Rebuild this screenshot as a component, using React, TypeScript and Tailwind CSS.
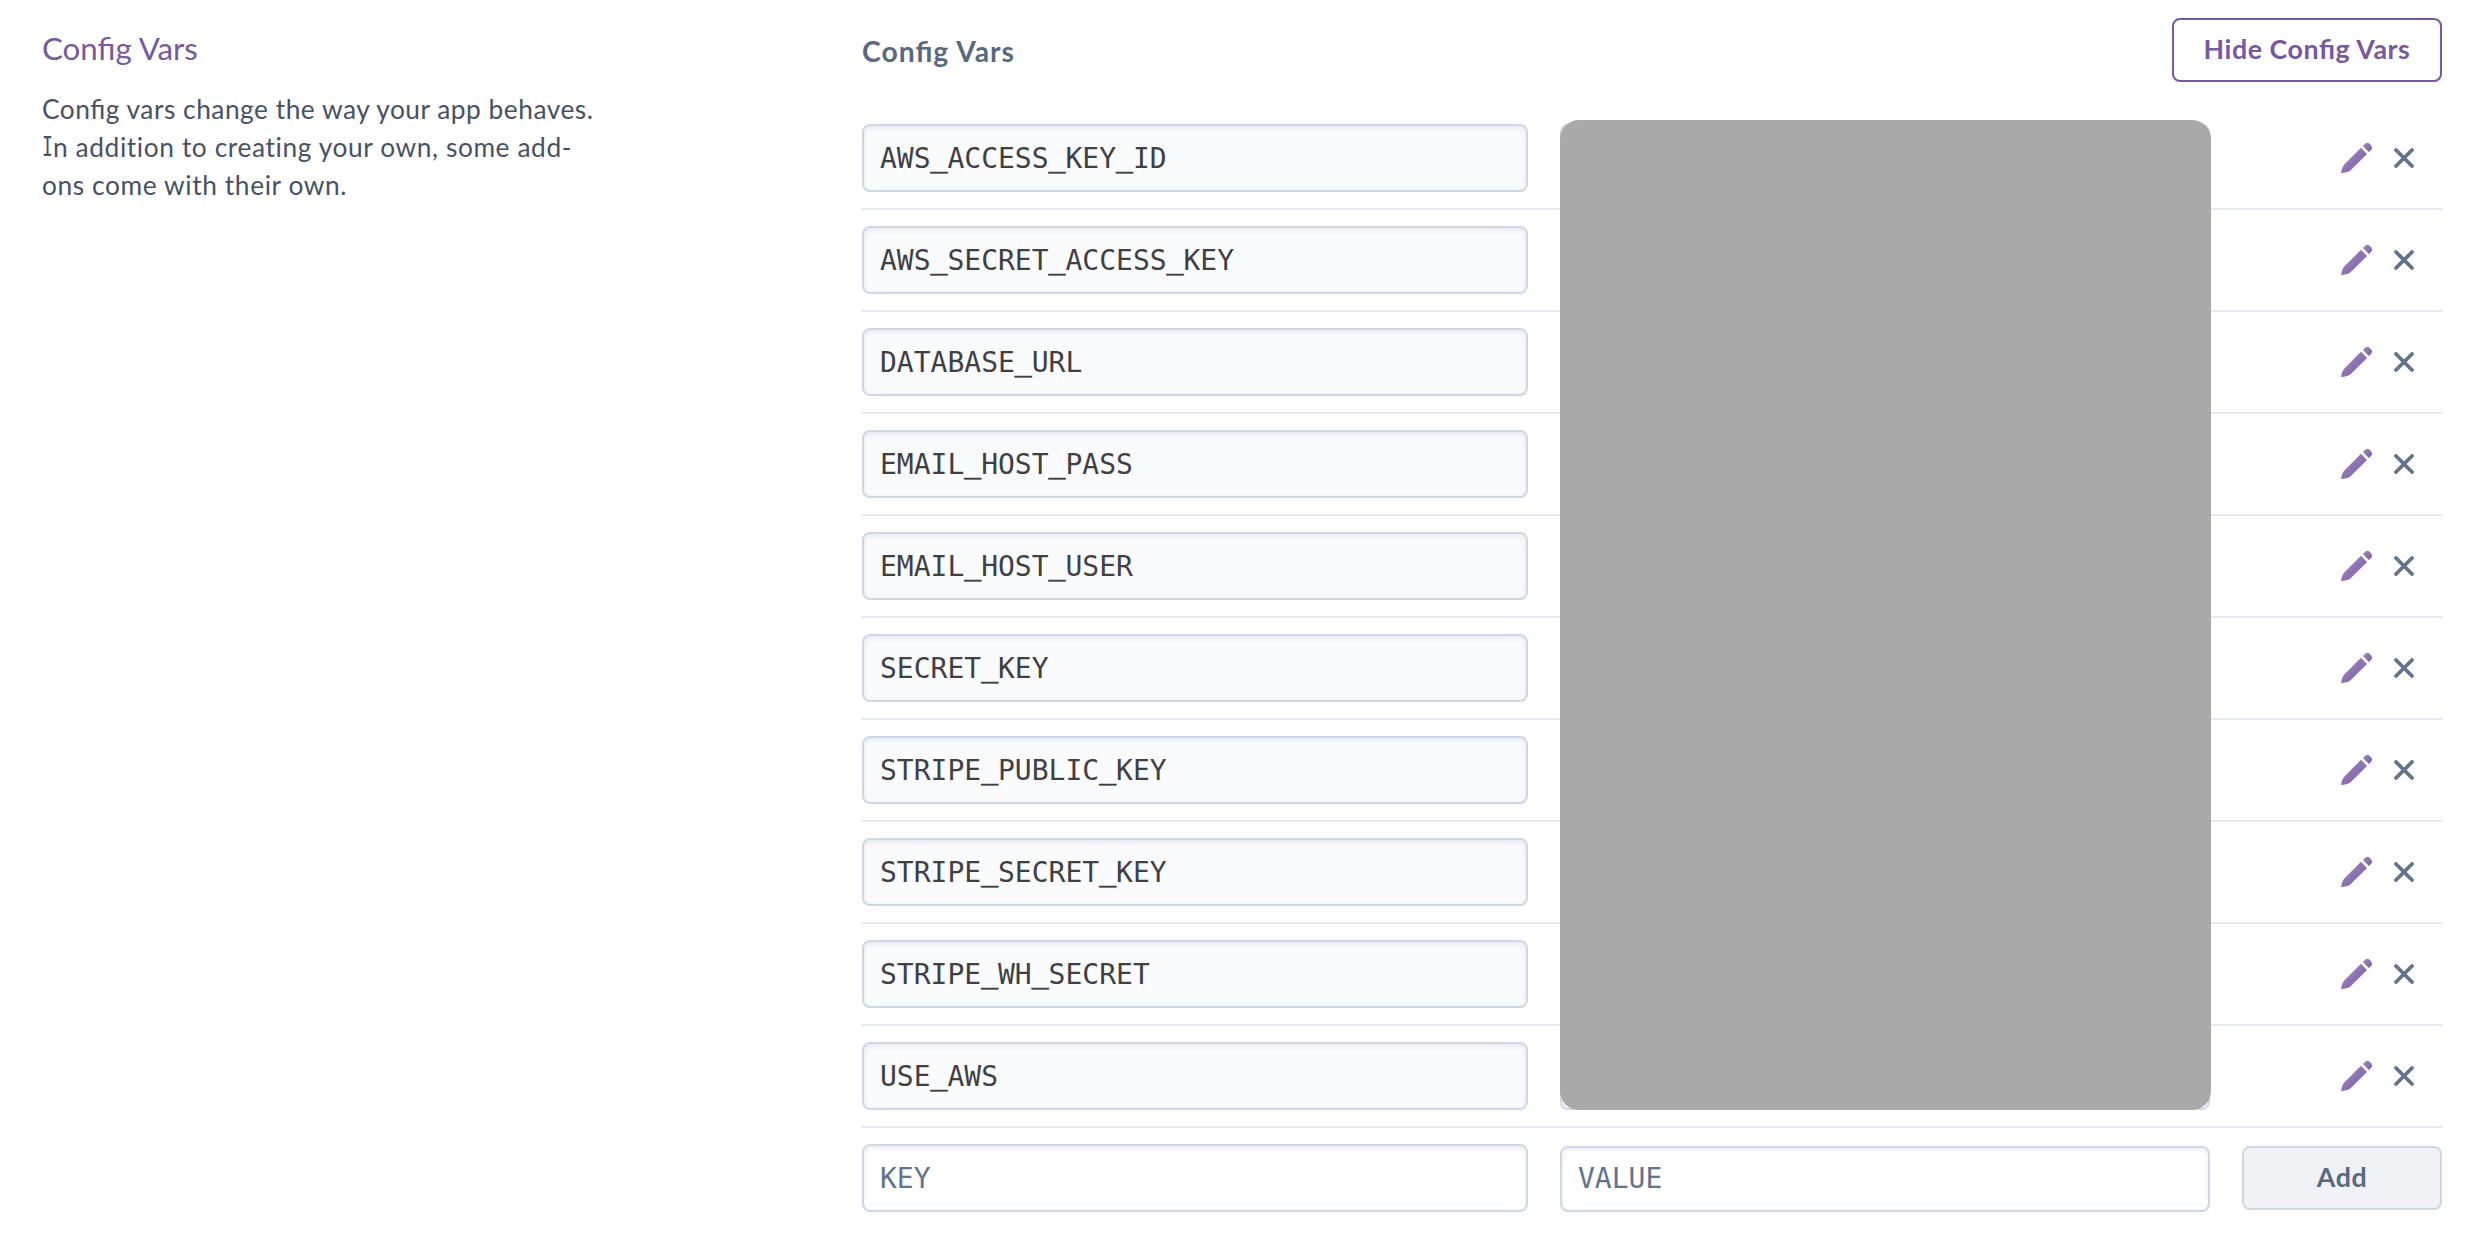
const keys = [
  "AWS_ACCESS_KEY_ID",
  "AWS_SECRET_ACCESS_KEY",
  "DATABASE_URL",
  "EMAIL_HOST_PASS",
  "EMAIL_HOST_USER",
  "SECRET_KEY",
  "STRIPE_PUBLIC_KEY",
  "STRIPE_SECRET_KEY",
  "STRIPE_WH_SECRET",
  "USE_AWS",
];

const field =
  "block w-full rounded-lg border-2 border-[#cfd7e6] px-4 font-['DejaVu_Sans_Mono',monospace] text-[28px] text-[#3f3f44] shadow-[inset_0_2px_5px_rgba(70,90,130,0.12)] outline-none placeholder:text-[#62738d] placeholder:opacity-100";

function KeyName({ name }: { name: string }) {
  return (
    <div className={`${field} h-[68px] bg-[#fafbfd] leading-[66px] whitespace-nowrap`}>
      {name.split(/(_)/).map((part, i) =>
        part === "_" ? (
          <span key={i} className="relative -top-0.5 [-webkit-text-stroke:0.8px_#3f3f44]">_</span>
        ) : (
          <span key={i}>{part}</span>
        ),
      )}
    </div>
  );
}

function Pencil() {
  return (
    <svg width="34" height="36" viewBox="0 0 34 36">
      <defs>
        <linearGradient id="pencil" x1="0" y1="0" x2="1" y2="1">
          <stop offset="0.2" stopColor="#9a82bd" />
          <stop offset="0.8" stopColor="#8263a8" />
        </linearGradient>
      </defs>
      <g fill="url(#pencil)">
        <path d="M1 33C1.5 29.3 2.6 26.3 4.6 24.2L21 7.8L27 13.9L10.8 30.1C8.2 32.3 4.6 33 1 33Z" />
        <path d="M22.9 6L25.2 3.7Q27.4 1.8 29.8 3.9L31 5.2Q33 7.6 31.2 9.8L28.9 12Z" />
      </g>
    </svg>
  );
}

function Cross() {
  return (
    <svg width="20" height="20" viewBox="0 0 20 20" stroke="#62738d" strokeWidth="3.8" strokeLinecap="round">
      <path d="M2 2L18 18M18 2L2 18" />
    </svg>
  );
}

export default function App() {
  return (
    <div className="flex h-[1242px] w-[2480px] overflow-hidden bg-white pl-[42px] font-['Lato',sans-serif]">
      <aside className="w-[820px] shrink-0 pt-7">
        <h2 className="text-[31.3px] leading-[40px] text-[#79589f]">Config Vars</h2>
        <p className="mt-[22px] text-[26.3px] leading-[38px] whitespace-nowrap text-[#475166]">
          <span className="tracking-[0.51px] [font-feature-settings:'liga'_1]">Config vars change the way your app behaves.</span>
          <br />
          <span className="tracking-[0.6px]">
            <span className="inline-block h-[38px] w-[11px] origin-left scale-x-[0.7] align-top font-['DejaVu_Sans_Mono',monospace] text-[26px]">I</span>n addition to creating your own, some add-
          </span>
          <br />
          <span className="tracking-[0.6px]">ons come with their own.</span>
        </p>
      </aside>
      <main className="w-[1580px]">
        <header className="flex h-[108px] justify-between pt-[18px]">
          <h3 className="pt-[13px] text-[28.3px] leading-[40px] font-bold tracking-[1px] text-[#596981] [font-feature-settings:'liga'_1]">Config Vars</h3>
          <button className="h-16 w-[270px] rounded-lg border-2 border-[#79589f] pb-0.5 text-[26.8px] font-bold tracking-[0.55px] text-[#79589f] [font-feature-settings:'liga'_1]">Hide Config Vars</button>
        </header>
        <div className="relative">
          {keys.map((k) => (
            <div key={k} className="grid h-[102px] grid-cols-[666px_650px_200px] items-center gap-x-8 border-b-2 border-[#e7ebf3]">
              <KeyName name={k} />
              <input readOnly className={`${field} h-[68px] bg-[#fafbfd]`} />
              <div className="flex items-center pl-[98px]">
                <Pencil />
                <span className="ml-5">
                  <Cross />
                </span>
              </div>
            </div>
          ))}
          <div className="absolute top-3 left-[698px] h-[990px] w-[651px] rounded-[19px] bg-[#a9a9a9]" />
        </div>
        <div className="grid grid-cols-[666px_650px_200px] items-start gap-x-8 pt-4">
          <input placeholder="KEY" className={`${field} h-[68px] bg-white`} />
          <input placeholder="VALUE" className={`${field} mt-0.5 h-[66px] bg-white pb-0.5`} />
          <button className="mt-0.5 h-16 rounded-lg border-2 border-[#cfd7e6] bg-[#eff1f5] pb-0.5 text-[26.8px] font-bold tracking-[0.55px] text-[#596981]">Add</button>
        </div>
      </main>
    </div>
  );
}
